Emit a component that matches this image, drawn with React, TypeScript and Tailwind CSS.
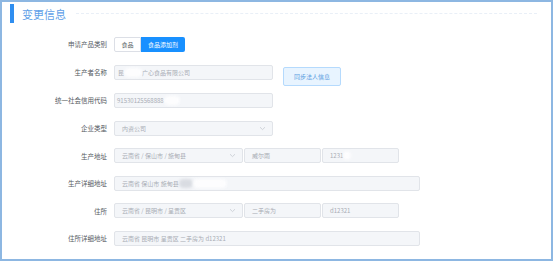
import React from "react";

const FONT = "font-['Noto_Sans_CJK_SC','Noto_Sans',sans-serif]";

function Chevron() {
  return (
    <svg width="7" height="5" viewBox="0 0 7 5" className="shrink-0">
      <path d="M1 1.2l2.5 2.4L6 1.2" fill="none" stroke="#c6cad2" strokeWidth="0.8" />
    </svg>
  );
}

function Blob({ w, tone = "white" }: { w: string; tone?: "white" | "grey" }) {
  return (
    <span
      className={`inline-block h-[9px] rounded-full blur-[1.5px] ${w} ${
        tone === "white" ? "bg-[#fdfdfe]" : "bg-[#d9dce2]"
      }`}
    />
  );
}

function Row({ label, h, children }: { label: string; h: string; children: React.ReactNode }) {
  return (
    <div className={`flex items-center ${h}`}>
      <div className="w-[105px] text-right text-[6.5px] leading-[10px] text-[#555a62]">{label}</div>
      <div className="ml-[7px] flex h-full items-center">{children}</div>
    </div>
  );
}

function Box({
  w,
  children,
  pl = "pl-[7px]",
  select = false,
}: {
  w: string;
  children?: React.ReactNode;
  pl?: string;
  select?: boolean;
}) {
  return (
    <div
      className={`flex h-[15px] items-center rounded-[2px] border border-[#e1e4e9] bg-[#f4f6f9] ${w} ${pl} pr-[6px] text-[6px] leading-[9px] text-[#a9adb5]`}
    >
      <div className="flex flex-1 items-center whitespace-nowrap">{children}</div>
      {select && <Chevron />}
    </div>
  );
}

export default function App() {
  return (
    <div className={`h-[262px] w-[554px] bg-white ${FONT}`}>
      <div className="flex h-[261px] w-[553px] flex-col border-2 border-[#8db7e2] bg-white">
        {/* header */}
        <div className="mb-[5px] flex h-[23px] items-center">
          <div className="ml-[8px] h-[19px] w-[4px] bg-[#2f8ef0]" />
          <div className="ml-[8px] text-[11px] leading-[14px] text-[#5ea0e8]">变更信息</div>
          <div className="ml-[10px] mr-[14px] flex-1 border-t border-dashed border-[#e9eff7]" />
        </div>

        <Row label="申请产品类别" h="h-[28px]">
          <div className="flex h-[15px] text-[6px] leading-[9px]">
            <div className="flex w-[27px] items-center justify-center rounded-l-[2px] border border-[#dcdfe6] bg-white text-[#555a62]">
              食品
            </div>
            <div className="flex w-[44px] items-center justify-center rounded-r-[2px] bg-[#1890ff] text-white">
              食品添加剂
            </div>
          </div>
        </Row>

        <Row label="生产者名称" h="h-[28px]">
          <Box w="w-[159px]" pl="pl-[3px]">
            <span>昆</span>
            <Blob w="w-[18px]" />
            <span>广心食品有限公司</span>
          </Box>
          <div className="ml-[10px] flex h-[19px] w-[58px] items-center justify-center self-end rounded-[2px] border border-[#b5dafd] bg-[#e8f4ff] text-[6px] leading-[9px] text-[#5b9de0]">
            同步法人信息
          </div>
        </Row>

        <Row label="统一社会信用代码" h="h-[28px]">
          <Box w="w-[159px]" pl="pl-[2px]">
            <span>91530125568888</span>
            <Blob w="w-[16px]" />
          </Box>
        </Row>

        <Row label="企业类型" h="h-[28px]">
          <Box w="w-[159px]" select>
            内资公司
          </Box>
        </Row>

        <Row label="生产地址" h="h-[27px]">
          <Box w="w-[129px]" select>
            云南省 / 保山市 / 施甸县
          </Box>
          <div className="ml-[1px]">
            <Box w="w-[77px]">威尔雨</Box>
          </div>
          <div className="ml-[1px]">
            <Box w="w-[77px]">
              <span>1231</span>
              <Blob w="w-[8px]" />
            </Box>
          </div>
        </Row>

        <Row label="生产详细地址" h="h-[28px]">
          <Box w="w-[306px]">
            <span>云南省 保山市 施甸县</span>
            <Blob w="w-[14px]" tone="grey" />
            <Blob w="w-[34px]" />
          </Box>
        </Row>

        <Row label="住所" h="h-[27px]">
          <Box w="w-[129px]" select>
            云南省 / 昆明市 / 呈贡区
          </Box>
          <div className="ml-[1px]">
            <Box w="w-[77px]">二手房为</Box>
          </div>
          <div className="ml-[1px]">
            <Box w="w-[77px]">d12321</Box>
          </div>
        </Row>

        <Row label="住所详细地址" h="h-[28px]">
          <Box w="w-[306px]">云南省 昆明市 呈贡区 二手房为 d12321</Box>
        </Row>
      </div>
    </div>
  );
}
